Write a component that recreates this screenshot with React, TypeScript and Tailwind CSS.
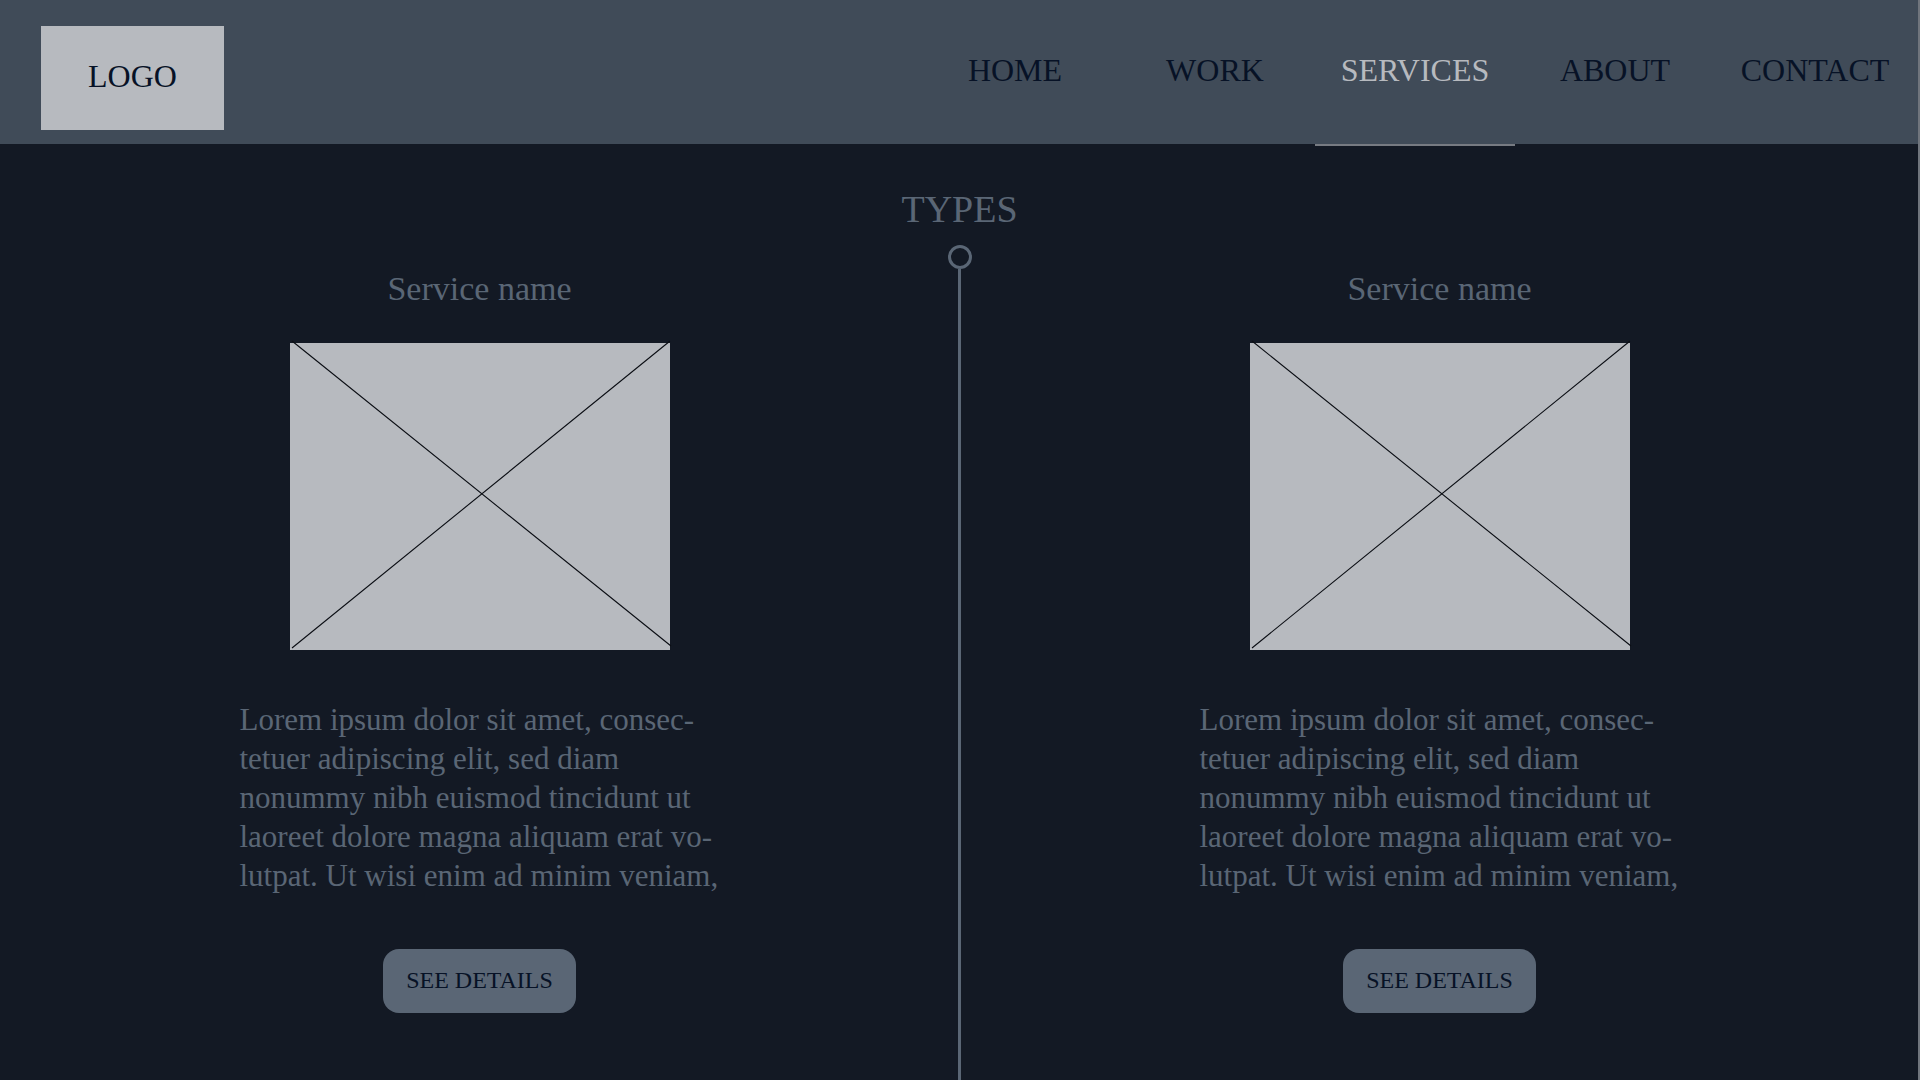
const navItems = ['HOME', 'WORK', 'SERVICES', 'ABOUT', 'CONTACT'];
const current = 'SERVICES';

const description = [
  'Lorem ipsum dolor sit amet, consec-',
  'tetuer adipiscing elit, sed diam',
  'nonummy nibh euismod tincidunt ut',
  'laoreet dolore magna aliquam erat vo-',
  'lutpat. Ut wisi enim ad minim veniam,',
];

function Header() {
  return (
    <header className="flex h-36 items-stretch justify-between bg-[#404b58] pr-[3px] pl-[41px]">
      <a
        href="#home"
        className="mt-[26px] flex h-[104px] w-[183px] items-center justify-center bg-[#b7babf] pb-1 text-[32px] text-[#071226]"
      >
        LOGO
      </a>
      <nav className="flex">
        {navItems.map((item) => (
          <a
            key={item}
            href={'#' + item.toLowerCase()}
            aria-current={item === current ? 'page' : undefined}
            className={
              item === current
                ? 'relative flex w-[200px] items-center justify-center pb-1 text-[32px] text-[#b7babf] after:absolute after:inset-x-0 after:top-full after:h-0.5 after:bg-[#777b82]'
                : 'flex w-[200px] items-center justify-center pb-1 text-[32px] text-[#071226]'
            }
          >
            {item}
          </a>
        ))}
      </nav>
    </header>
  );
}

function Placeholder() {
  return (
    <svg
      role="img"
      aria-label="Service picture"
      viewBox="0 0 380 307"
      className="mt-[34px] h-[307px] w-[380px] overflow-visible bg-[#b7babf]"
    >
      <path d="M2 -2L381 303M2 305L380 -2" stroke="#0b0e14" strokeWidth="1.1" fill="none" />
    </svg>
  );
}

function Service() {
  return (
    <article className="flex flex-1 flex-col items-center pb-12">
      <h2 className="text-[34px] leading-10">Service name</h2>
      <Placeholder />
      <p className="mt-[50px] w-[480px] text-[31px] leading-[39px] whitespace-nowrap">
        {description.map((line) => (
          <span key={line} className="block">
            {line}
          </span>
        ))}
      </p>
      <button
        type="button"
        className="mt-[54px] h-16 w-[193px] rounded-2xl bg-[#5a6675] pb-0.5 text-2xl text-[#071226]"
      >
        SEE DETAILS
      </button>
    </article>
  );
}

export default function App() {
  return (
    <div className="flex min-h-screen flex-col border-r-2 border-[#70757d] bg-[#131924] font-['Liberation_Serif',serif] text-[#5a6675]">
      <Header />
      <main className="flex flex-1 flex-col items-center pt-[45px] pl-px">
        <h1 className="text-[38px] leading-10">TYPES</h1>
        <div className="mt-4 size-6 rounded-full border-3 border-[#5a6675]" />
        <div className="flex w-full flex-1">
          <Service />
          <div className="w-[3px] bg-[#5a6675]" />
          <Service />
        </div>
      </main>
    </div>
  );
}
